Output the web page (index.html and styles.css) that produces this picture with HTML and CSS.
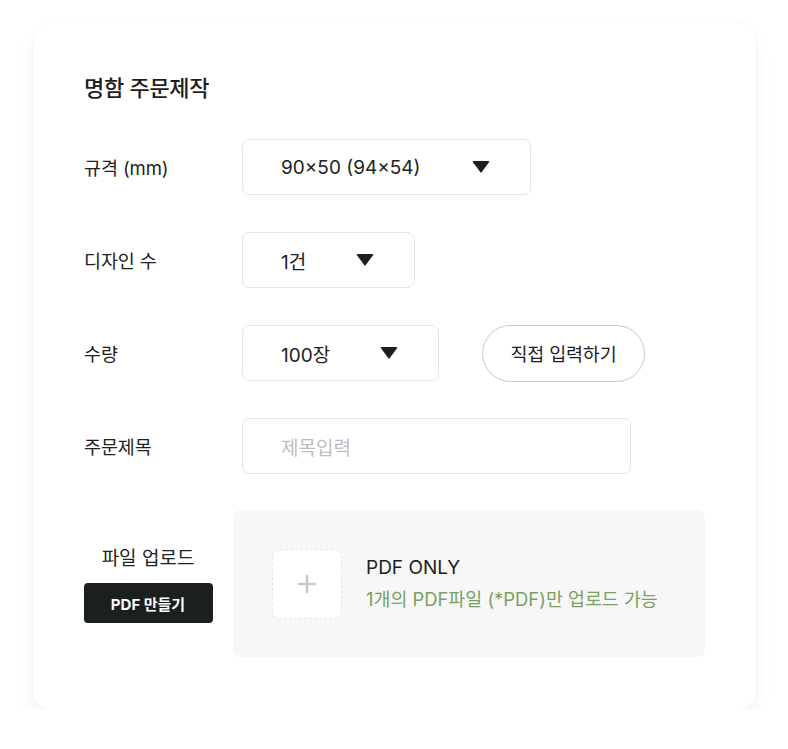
FILE: index.html
```html
<!DOCTYPE html>
<html lang="ko">
<head>
<meta charset="utf-8">
<link rel="stylesheet" href="styles.css">
</head>
<body>
<div class="card">
  <h1 class="title">명함 주문제작</h1>
  <div class="rows">
    <div class="row">
      <div class="label">규격 (mm)</div>
      <div class="select w-size"><span>90×50 (94×54)</span><i class="caret"></i></div>
    </div>
    <div class="row">
      <div class="label">디자인 수</div>
      <div class="select w-design"><span>1건</span><i class="caret"></i></div>
    </div>
    <div class="row">
      <div class="label">수량</div>
      <div class="select w-qty"><span>100장</span><i class="caret"></i></div>
      <button class="pill">직접 입력하기</button>
    </div>
    <div class="row">
      <div class="label">주문제목</div>
      <div class="input"><span class="ph">제목입력</span></div>
    </div>
  </div>
  <div class="upload">
    <div class="up-left">
      <div class="up-label">파일 업로드</div>
      <button class="dark-btn">PDF 만들기</button>
    </div>
    <div class="drop">
      <div class="plus-box">
        <svg width="20" height="20" viewBox="0 0 20 20"><path d="M10 2v16M2 10h16" stroke="#c9c9c9" stroke-width="2.6" stroke-linecap="round"/></svg>
      </div>
      <div class="drop-text">
        <div class="only">PDF ONLY</div>
        <div class="hint">1개의 PDF파일 (*PDF)만 업로드 가능</div>
      </div>
    </div>
  </div>
</div>
</body>
</html>
```
FILE: styles.css
```css
* { box-sizing: border-box; }
html, body { margin: 0; padding: 0; background: #fff; }
body {
  font-family: Inter, "Noto Sans CJK KR", sans-serif;
  color: #222;
  padding: 23px 0 0 33px;
}
.card {
  width: 723px;
  height: 686px;
  background: #fff;
  border-radius: 18px;
  box-shadow: 0 0 3px rgba(0,0,0,0.04), 0 10px 20px rgba(0,0,0,0.05);
  padding: 49px 51px 0 51px;
}
.title {
  margin: 0;
  font-size: 22px;
  font-weight: 500;
  line-height: 32px;
  letter-spacing: -0.3px;
  color: #1e1e1e;
}
.rows {
  display: flex;
  flex-direction: column;
  gap: 37px;
  margin-top: 35px;
}
.row {
  display: flex;
  align-items: center;
  height: 56px;
}
.label {
  width: 158px;
  font-size: 18.5px;
  letter-spacing: -0.1px;
  color: #222;
}
.select {
  height: 56px;
  border: 1px solid #e6e6e6;
  border-radius: 7px;
  display: flex;
  align-items: center;
  justify-content: space-between;
  padding: 0 40px 0 38px;
  font-size: 19px;
  color: #222;
}
.w-size { width: 289px; }
.w-design { width: 173px; }
.w-qty { width: 197px; }
.caret {
  width: 0; height: 0;
  border-left: 9.5px solid transparent;
  border-right: 9.5px solid transparent;
  border-top: 12px solid #1e1e1e;
  border-radius: 2px;
}
.pill {
  margin-left: 43px;
  width: 163px;
  height: 57px;
  border: 1.5px solid #c8c8c8;
  border-radius: 29px;
  background: #fff;
  font-family: inherit;
  font-size: 18.5px;
  font-weight: 400;
  color: #1e1e1e;
  letter-spacing: -0.2px;
}
.input {
  width: 389px;
  height: 56px;
  border: 1px solid #e6e6e6;
  border-radius: 7px;
  display: flex;
  align-items: center;
  padding-left: 38px;
  font-size: 19px;
}
.ph { color: #bdbdbd; }
.upload {
  display: flex;
  margin-top: 36px;
}
.up-left {
  width: 128px;
  display: flex;
  flex-direction: column;
  align-items: center;
  padding-top: 36px;
}
.up-label {
  font-size: 19px;
  font-weight: 400;
  color: #222;
  line-height: 26px;
}
.dark-btn {
  margin-top: 11px;
  width: 129px;
  height: 40px;
  border: none;
  border-radius: 4px;
  background: #1b201e;
  color: #fff;
  font-family: inherit;
  font-size: 15px;
  font-weight: 700;
}
.drop {
  margin-left: 21px;
  width: 472px;
  height: 147px;
  background: #f7f7f7;
  border-radius: 8px;
  display: flex;
  align-items: center;
  padding-left: 39px;
}
.plus-box {
  width: 70px;
  height: 70px;
  background: #fff;
  border: 1px dashed #e4e4e4;
  border-radius: 8px;
  display: flex;
  align-items: center;
  justify-content: center;
}
.drop-text { margin-left: 24px; }
.only {
  font-size: 19px;
  font-weight: 400;
  color: #1e1e1e;
  line-height: 26px;
}
.hint {
  margin-top: 5px;
  font-size: 18.4px;
  color: #7a9f62;
  line-height: 26px;
}
```
